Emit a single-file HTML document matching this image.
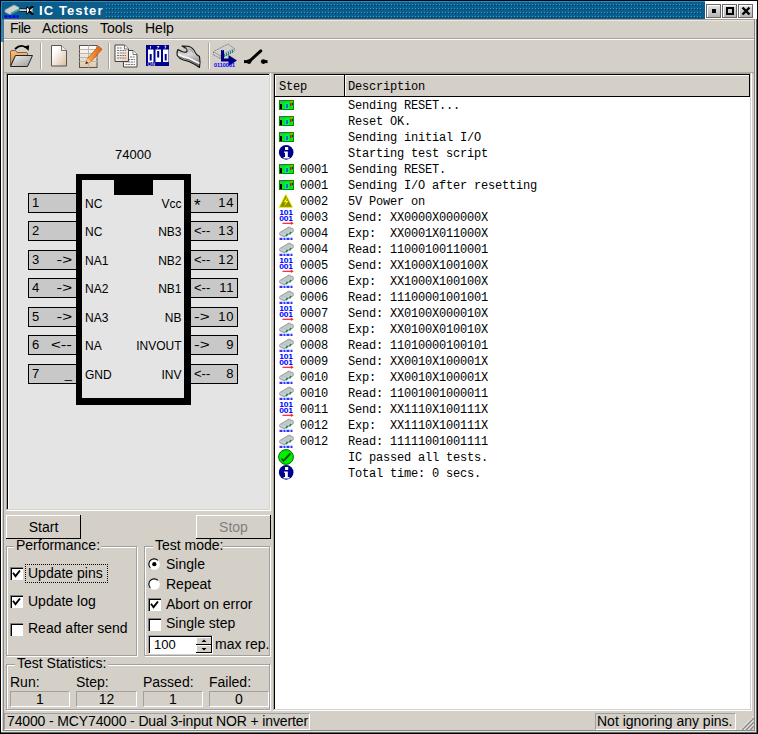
<!DOCTYPE html><html><head><meta charset="utf-8"><style>
html,body{margin:0;padding:0;}
body{width:758px;height:734px;position:relative;overflow:hidden;background:#d4d0c8;font-family:'Liberation Sans',sans-serif;}
.a{position:absolute;box-sizing:border-box;}
.t{line-height:16px;white-space:pre;}
</style></head><body>
<div class="a" style="left:0px;top:0px;width:758px;height:734px;border:1px solid #000;"></div>
<div class="a" style="left:1px;top:19px;width:1px;height:714px;background:#fff"></div>
<div class="a" style="left:3px;top:19px;width:1px;height:712px;background:#888"></div>
<div class="a" style="left:754px;top:19px;width:1px;height:712px;background:#888"></div>
<div class="a" style="left:755px;top:19px;width:1px;height:714px;background:#e8e8e8"></div>
<div class="a" style="left:756px;top:19px;width:1px;height:714px;background:#666"></div>
<div class="a" style="left:3px;top:730px;width:752px;height:1px;background:#888"></div>
<div class="a" style="left:1px;top:731px;width:755px;height:1px;background:#e4e4e4"></div>
<div class="a" style="left:1px;top:732px;width:756px;height:1px;background:#666"></div>
<div class="a" style="left:1px;top:1px;width:704px;height:18px;background:#1a8fd0"></div>
<div class="a" style="left:2px;top:2px;width:703px;height:17px;background:#0b5d8c"></div>
<svg class="a" style="left:106px;top:4px" width="599" height="14"><defs><pattern id="dp" width="3" height="4" patternUnits="userSpaceOnUse"><rect x="0" y="0" width="1" height="1" fill="#2a9fe0"/><rect x="1" y="1" width="1" height="1" fill="#073a58"/></pattern></defs><rect width="597" height="14" fill="url(#dp)"/></svg>
<div class="a t" style="left:39px;top:3px;font-size:13px;font-family:'Liberation Sans', sans-serif;color:#fff;font-weight:bold;letter-spacing:1.1px;">IC Tester</div>
<svg class="a" style="left:0px;top:0px" width="36" height="20"><path d="M5 10 L14 5 L19 7.5 L19 10 L10 14.5 L5 12 Z" fill="#d0d0d0" stroke="#a8a8a8" stroke-width="0.7"/><path d="M11 13.5 L19 9.5" stroke="#30a090" stroke-width="1.6"/><path d="M4.5 16.5 H18.5" stroke="#0000ff" stroke-width="2.5" stroke-dasharray="3 1"/><rect x="19.5" y="8.5" width="7.5" height="3" fill="#000"/><rect x="19.5" y="9.3" width="7.5" height="1.5" fill="#fff"/><path d="M26.5 6 L29 8 L31.5 6 L33.8 6 L32 10 L33.8 14.8 L31.5 14.8 L29 12.5 L26.5 14.8 Z" fill="#000"/><path d="M27.5 8 L28.7 10 L27.5 12.5 Z M30.5 9.5 L30.5 11 M32.3 8 L31.5 10.3 L32.3 12.5" fill="#fff" stroke="#fff" stroke-width="0.9"/></svg>
<div class="a" style="left:705px;top:1px;width:52px;height:18px;background:#fff"></div>
<div class="a" style="left:706px;top:4px;width:15px;height:14px;border:1px solid #6a6a6a;background:linear-gradient(#e6e6e6,#b4b4b4);"></div>
<div class="a" style="left:707px;top:5px;width:13px;height:12px;border-top:1px solid #fff;border-left:1px solid #fff;"></div>
<div class="a" style="left:722px;top:4px;width:15px;height:14px;border:1px solid #6a6a6a;background:linear-gradient(#e6e6e6,#b4b4b4);"></div>
<div class="a" style="left:723px;top:5px;width:13px;height:12px;border-top:1px solid #fff;border-left:1px solid #fff;"></div>
<div class="a" style="left:738px;top:4px;width:15px;height:14px;border:1px solid #6a6a6a;background:linear-gradient(#e6e6e6,#b4b4b4);"></div>
<div class="a" style="left:739px;top:5px;width:13px;height:12px;border-top:1px solid #fff;border-left:1px solid #fff;"></div>
<div class="a" style="left:712px;top:9px;width:4px;height:4px;background:#000"></div>
<div class="a" style="left:726px;top:7px;width:8px;height:8px;border:2px solid #000;background:#c8c8c8"></div>
<svg class="a" style="left:741px;top:6px" width="10" height="10"><path d="M1.5 1.5 L8.5 8.5 M8.5 1.5 L1.5 8.5" stroke="#000" stroke-width="2.4"/></svg>
<div class="a" style="left:1px;top:19px;width:2px;height:23px;background:#1a8fd0"></div>
<div class="a" style="left:3px;top:19px;width:1px;height:23px;background:#6a6a6a"></div>
<div class="a" style="left:4px;top:19px;width:750px;height:1px;background:#a89c8c"></div>
<div class="a" style="left:4px;top:20px;width:750px;height:1px;background:#ebe7df"></div>
<div class="a" style="left:4px;top:38px;width:750px;height:1px;background:#a8a49c"></div>
<div class="a" style="left:4px;top:39px;width:750px;height:1px;background:#fff"></div>
<div class="a t" style="left:10px;top:20px;font-size:14px;font-family:'Liberation Sans', sans-serif;color:#000;letter-spacing:-0.5px">File</div>
<div class="a t" style="left:42px;top:20px;font-size:14px;font-family:'Liberation Sans', sans-serif;color:#000;letter-spacing:0px">Actions</div>
<div class="a t" style="left:100px;top:20px;font-size:14px;font-family:'Liberation Sans', sans-serif;color:#000;letter-spacing:0px">Tools</div>
<div class="a t" style="left:145px;top:20px;font-size:14px;font-family:'Liberation Sans', sans-serif;color:#000;letter-spacing:0px">Help</div>
<div class="a" style="left:40px;top:43px;width:1px;height:26px;background:#a8a49c"></div>
<div class="a" style="left:41px;top:43px;width:1px;height:26px;background:#fff"></div>
<div class="a" style="left:108px;top:43px;width:1px;height:26px;background:#a8a49c"></div>
<div class="a" style="left:109px;top:43px;width:1px;height:26px;background:#fff"></div>
<div class="a" style="left:208px;top:43px;width:1px;height:26px;background:#a8a49c"></div>
<div class="a" style="left:209px;top:43px;width:1px;height:26px;background:#fff"></div>
<div class="a" style="left:4px;top:72px;width:750px;height:1px;background:#b0aca4"></div>
<div class="a" style="left:4px;top:73px;width:750px;height:1px;background:#c4c0b8"></div>
<svg class="a" style="left:6px;top:42px" width="32" height="28">
<defs><linearGradient id="fg" x1="0" y1="0" x2="1" y2="1"><stop offset="0" stop-color="#f0f0f0"/><stop offset="1" stop-color="#9a9a9a"/></linearGradient>
<linearGradient id="fo" x1="0" y1="0" x2="0" y2="1"><stop offset="0" stop-color="#ffc080"/><stop offset="1" stop-color="#d08030"/></linearGradient></defs>
<path d="M9 7 Q14.5 1.8 19.5 5.2" fill="none" stroke="#000" stroke-width="1.9"/>
<path d="M17.5 4.5 L23.2 3.2 L22.6 8.8 Z" fill="#000"/>
<path d="M4.5 24 L4.5 10 Q4.5 8.5 6 8.5 L9.5 8.5 L11 10.5 L20.5 10.5 Q21.5 10.5 21.5 12 L21.5 13.5 L9.5 13.5 Z" fill="url(#fo)" stroke="#5a4a3a" stroke-width="0.8"/>
<path d="M4.5 24.5 L9.5 13.5 L26.5 13.5 L21.5 24.5 Z" fill="url(#fg)" stroke="#222" stroke-width="1"/>
</svg>
<svg class="a" style="left:46px;top:42px" width="26" height="28">
<defs><linearGradient id="dg" x1="0.2" y1="0.3" x2="0.9" y2="1"><stop offset="0" stop-color="#fff"/><stop offset="1" stop-color="#dcc0a0"/></linearGradient></defs>
<path d="M5.5 3.5 L15.5 3.5 L20.5 8.5 L20.5 24 L5.5 24 Z" fill="url(#dg)" stroke="#555" stroke-width="1"/>
<path d="M15.5 3.5 L15.5 8.5 L20.5 8.5" fill="#eee" stroke="#555" stroke-width="0.8"/>
</svg>
<svg class="a" style="left:76px;top:42px" width="30" height="28">
<defs><linearGradient id="tg" x1="0" y1="0" x2="0" y2="1"><stop offset="0" stop-color="#fff"/><stop offset="1" stop-color="#e0c8a8"/></linearGradient>
<linearGradient id="pg" x1="0" y1="0" x2="1" y2="0"><stop offset="0" stop-color="#ffb060"/><stop offset="1" stop-color="#e06000"/></linearGradient></defs>
<rect x="3.5" y="3.5" width="17.5" height="22" fill="url(#tg)" stroke="#555" stroke-width="1"/>
<path d="M3.5 7.5 H21.5 M3.5 11.5 H21.5 M3.5 15.5 H21.5 M3.5 19.5 H21.5 M12.5 3.5 V25.5" stroke="#b8b8b8" stroke-width="1"/>
<path d="M9.5 22 L11.5 16.5 L22.5 4 L26 7.3 L15 19.7 Z" fill="url(#pg)" stroke="#b04000" stroke-width="0.6"/>
<path d="M9.5 22 L11.5 16.5 L15 19.7 Z" fill="#f0c8a0"/>
<path d="M9.5 22 L10.5 19.3 L12.3 20.9 Z" fill="#222"/>
</svg>
<svg class="a" style="left:110px;top:42px" width="30" height="28">
<path d="M13.5 8.5 L23 8.5 L27 12.5 L27 25 L13.5 25 Z" fill="#fafafa" stroke="#444" stroke-width="1"/>
<path d="M23 8.5 L23 12.5 L27 12.5" fill="#fff" stroke="#444" stroke-width="0.7"/>
<path d="M20 15 H25 M15.5 17.5 H25 M15.5 20 H25 M15.5 22.5 H25" stroke="#777" stroke-width="1" stroke-dasharray="2 0.7"/>
<defs><linearGradient id="cg" x1="0" y1="0" x2="1" y2="1"><stop offset="0.3" stop-color="#fafafa"/><stop offset="1" stop-color="#e8c8b0"/></linearGradient></defs>
<path d="M5 3 L14.5 3 L18.5 7 L18.5 19.5 L5 19.5 Z" fill="url(#cg)" stroke="#444" stroke-width="1"/>
<path d="M14.5 3 L14.5 7 L18.5 7" fill="#fff" stroke="#444" stroke-width="0.7"/>
<path d="M7 6 H12 M7 8.5 H16 M7 11 H16 M7 13.5 H16 M7 16 H16" stroke="#777" stroke-width="1" stroke-dasharray="2 0.7"/>
</svg>
<svg class="a" style="left:146px;top:45px" width="23" height="21">
<rect x="0" y="0" width="23" height="21" fill="#000090"/>
<rect x="2" y="4.5" width="5.5" height="12.5" fill="#fff"/><rect x="9.5" y="4.5" width="5.5" height="12.5" fill="#fff"/><rect x="17" y="4.5" width="5.5" height="12.5" fill="#fff"/>
<rect x="3.7" y="9" width="2" height="6.5" fill="#000090"/><rect x="11.2" y="6" width="2" height="6.5" fill="#000090"/><rect x="18.7" y="9" width="2" height="6.5" fill="#000090"/>
<path d="M4.5 1 V3.5 M11 1.5 H13 L11.5 3.5 M18.5 1 H20 L19 3.5" stroke="#fff" stroke-width="0.8" fill="none"/>
<text x="1.5" y="20.5" font-size="5" fill="#fff" font-family="Liberation Sans">ON</text>
</svg>
<svg class="a" style="left:174px;top:44px" width="30" height="26">
<defs><linearGradient id="wg" x1="0" y1="0" x2="0.3" y2="1"><stop offset="0" stop-color="#a8a8a8"/><stop offset="0.5" stop-color="#d8d8d8"/><stop offset="1" stop-color="#8a8a8a"/></linearGradient></defs>
<path d="M8 2 L14.5 2.2 Q19 3.5 21 8 L22.5 10.5 L25.5 12.5 L26 18 L25.5 23.5 L21 20.5 L15 17.5 L9.5 16 Q5 14.5 3.2 11.5 L3 8 L4 5.5 L8.5 7.8 Q11.5 8.8 13 7.5 Q13.5 5.5 11.8 4.3 Z" fill="url(#wg)" stroke="#111" stroke-width="1.1" stroke-linejoin="round"/>
<path d="M4.2 10 Q9 13.2 14.5 14 L25.5 19.3" fill="none" stroke="#fff" stroke-width="1.4"/>
<path d="M5.5 12.8 Q10 15.3 15 15.8 L25 21.5" fill="none" stroke="#6a6a6a" stroke-width="1"/>
<path d="M9.5 4 Q13 4.5 14.8 7.5 M15.5 5 Q18.5 6 19.5 9.5" fill="none" stroke="#888" stroke-width="0.8"/>
</svg>
<svg class="a" style="left:210px;top:42px" width="30" height="28">
<path d="M3.5 9.5 L18 2 L24.5 6.5 L24.5 9 L10 16.5 L3.5 13 Z" fill="#d0d0d0" stroke="#808080" stroke-width="1" stroke-dasharray="1.2 0.6"/>
<path d="M3.5 10 L10 13.5 L24.5 6.5 M10 13.5 V16.5" fill="none" stroke="#909090" stroke-width="0.8"/>
<path d="M14.5 15 V12 M16.5 14 V11 M18.5 13 V10 M20.5 12 V9 M22.5 11 V8" stroke="#109080" stroke-width="1"/>
<path d="M11 8 L12.2 8 L12.6 9 L13.2 8 L14 8 V16.5 H18.5 V13 L27 18.5 L18.5 24 V19.5 H11 Z" fill="#000080"/>
<text x="4" y="25.2" font-family="Liberation Sans" font-weight="bold" font-size="6" fill="#0000ff" textLength="21" lengthAdjust="spacingAndGlyphs">0110001</text>
</svg>
<svg class="a" style="left:240px;top:42px" width="32" height="28">
<path d="M4 19.6 H9" stroke="#000" stroke-width="3"/>
<circle cx="9" cy="19.6" r="2.4" fill="#000"/>
<path d="M9 19.6 L20.8 8.9" stroke="#000" stroke-width="3" stroke-linecap="round"/>
<circle cx="23.3" cy="19.6" r="2.4" fill="#000"/>
<path d="M23.3 19.6 H27.5" stroke="#000" stroke-width="3"/>
</svg>
<div class="a" style="left:6px;top:73px;width:265px;height:438px;background:#fff"></div>
<div class="a" style="left:6px;top:73px;width:264px;height:437px;background:#a0a0a0"></div>
<div class="a" style="left:7px;top:74px;width:263px;height:436px;background:#d8d4cc"></div>
<div class="a" style="left:7px;top:74px;width:262px;height:435px;background:#000"></div>
<div class="a" style="left:8px;top:75px;width:261px;height:434px;background:#fff"></div>
<div class="a" style="left:9px;top:76px;width:260px;height:433px;background:#e4e4e4"></div>
<div class="a t" style="left:115px;top:147px;font-size:13px;font-family:'Liberation Sans', sans-serif;color:#000;">74000</div>
<div class="a" style="left:28px;top:193px;width:50px;height:20px;border:1px solid #000;background:#c8c8c8"></div>
<div class="a" style="left:189px;top:193px;width:49px;height:20px;border:1px solid #000;background:#c8c8c8"></div>
<div class="a t" style="left:32px;top:195px;font-size:13px;font-family:'Liberation Sans', sans-serif;color:#000;">1</div>
<div class="a t" style="left:200px;top:195px;width:34px;text-align:right;font-size:13px;letter-spacing:0.6px">14</div>
<div class="a t" style="left:194px;top:198px;font-size:17px;">*</div>
<div class="a t" style="left:85px;top:196px;font-size:12px;font-family:'Liberation Sans', sans-serif;color:#000;">NC</div>
<div class="a t" style="left:100px;top:196px;width:81.5px;text-align:right;font-size:12px;">Vcc</div>
<div class="a" style="left:28px;top:221px;width:50px;height:20px;border:1px solid #000;background:#c8c8c8"></div>
<div class="a" style="left:189px;top:221px;width:49px;height:20px;border:1px solid #000;background:#c8c8c8"></div>
<div class="a t" style="left:32px;top:223px;font-size:13px;font-family:'Liberation Sans', sans-serif;color:#000;">2</div>
<div class="a t" style="left:200px;top:223px;width:34px;text-align:right;font-size:13px;letter-spacing:0.6px">13</div>
<div class="a t" style="left:194px;top:223px;font-size:13px;">&lt;--</div>
<div class="a t" style="left:85px;top:224px;font-size:12px;font-family:'Liberation Sans', sans-serif;color:#000;">NC</div>
<div class="a t" style="left:100px;top:224px;width:81.5px;text-align:right;font-size:12px;">NB3</div>
<div class="a" style="left:28px;top:250px;width:50px;height:20px;border:1px solid #000;background:#c8c8c8"></div>
<div class="a" style="left:189px;top:250px;width:49px;height:20px;border:1px solid #000;background:#c8c8c8"></div>
<div class="a t" style="left:32px;top:252px;font-size:13px;font-family:'Liberation Sans', sans-serif;color:#000;">3</div>
<div class="a t" style="left:40px;top:252px;width:32px;text-align:right;font-size:13px;transform:scaleX(1.3);transform-origin:100% 0">-&gt;</div>
<div class="a t" style="left:200px;top:252px;width:34px;text-align:right;font-size:13px;letter-spacing:0.6px">12</div>
<div class="a t" style="left:194px;top:252px;font-size:13px;">&lt;--</div>
<div class="a t" style="left:85px;top:253px;font-size:12px;font-family:'Liberation Sans', sans-serif;color:#000;">NA1</div>
<div class="a t" style="left:100px;top:253px;width:81.5px;text-align:right;font-size:12px;">NB2</div>
<div class="a" style="left:28px;top:278px;width:50px;height:20px;border:1px solid #000;background:#c8c8c8"></div>
<div class="a" style="left:189px;top:278px;width:49px;height:20px;border:1px solid #000;background:#c8c8c8"></div>
<div class="a t" style="left:32px;top:280px;font-size:13px;font-family:'Liberation Sans', sans-serif;color:#000;">4</div>
<div class="a t" style="left:40px;top:280px;width:32px;text-align:right;font-size:13px;transform:scaleX(1.3);transform-origin:100% 0">-&gt;</div>
<div class="a t" style="left:200px;top:280px;width:34px;text-align:right;font-size:13px;letter-spacing:0.6px">11</div>
<div class="a t" style="left:194px;top:280px;font-size:13px;">&lt;--</div>
<div class="a t" style="left:85px;top:281px;font-size:12px;font-family:'Liberation Sans', sans-serif;color:#000;">NA2</div>
<div class="a t" style="left:100px;top:281px;width:81.5px;text-align:right;font-size:12px;">NB1</div>
<div class="a" style="left:28px;top:307px;width:50px;height:20px;border:1px solid #000;background:#c8c8c8"></div>
<div class="a" style="left:189px;top:307px;width:49px;height:20px;border:1px solid #000;background:#c8c8c8"></div>
<div class="a t" style="left:32px;top:309px;font-size:13px;font-family:'Liberation Sans', sans-serif;color:#000;">5</div>
<div class="a t" style="left:40px;top:309px;width:32px;text-align:right;font-size:13px;transform:scaleX(1.3);transform-origin:100% 0">-&gt;</div>
<div class="a t" style="left:200px;top:309px;width:34px;text-align:right;font-size:13px;letter-spacing:0.6px">10</div>
<div class="a t" style="left:194px;top:309px;font-size:13px;transform:scaleX(1.3);transform-origin:0 0">-&gt;</div>
<div class="a t" style="left:85px;top:310px;font-size:12px;font-family:'Liberation Sans', sans-serif;color:#000;">NA3</div>
<div class="a t" style="left:100px;top:310px;width:81.5px;text-align:right;font-size:12px;">NB</div>
<div class="a" style="left:28px;top:335px;width:50px;height:20px;border:1px solid #000;background:#c8c8c8"></div>
<div class="a" style="left:189px;top:335px;width:49px;height:20px;border:1px solid #000;background:#c8c8c8"></div>
<div class="a t" style="left:32px;top:337px;font-size:13px;font-family:'Liberation Sans', sans-serif;color:#000;">6</div>
<div class="a t" style="left:40px;top:337px;width:32px;text-align:right;font-size:13px;transform:scaleX(1.3);transform-origin:100% 0">&lt;--</div>
<div class="a t" style="left:200px;top:337px;width:34px;text-align:right;font-size:13px;letter-spacing:0.6px">9</div>
<div class="a t" style="left:194px;top:337px;font-size:13px;transform:scaleX(1.3);transform-origin:0 0">-&gt;</div>
<div class="a t" style="left:85px;top:338px;font-size:12px;font-family:'Liberation Sans', sans-serif;color:#000;">NA</div>
<div class="a t" style="left:100px;top:338px;width:81.5px;text-align:right;font-size:12px;">INVOUT</div>
<div class="a" style="left:28px;top:364px;width:50px;height:20px;border:1px solid #000;background:#c8c8c8"></div>
<div class="a" style="left:189px;top:364px;width:49px;height:20px;border:1px solid #000;background:#c8c8c8"></div>
<div class="a t" style="left:32px;top:366px;font-size:13px;font-family:'Liberation Sans', sans-serif;color:#000;">7</div>
<div class="a t" style="left:40px;top:366px;width:32px;text-align:right;font-size:13px;">_</div>
<div class="a t" style="left:200px;top:366px;width:34px;text-align:right;font-size:13px;letter-spacing:0.6px">8</div>
<div class="a t" style="left:194px;top:366px;font-size:13px;">&lt;--</div>
<div class="a t" style="left:85px;top:367px;font-size:12px;font-family:'Liberation Sans', sans-serif;color:#000;">GND</div>
<div class="a t" style="left:100px;top:367px;width:81.5px;text-align:right;font-size:12px;">INV</div>
<div class="a" style="left:76px;top:174px;width:115px;height:231px;border-style:solid;border-color:#000;border-width:6px 7px 7px 6px;"></div>
<div class="a" style="left:114px;top:180px;width:39px;height:15px;background:#000"></div>
<div class="a" style="left:6px;top:515px;width:75px;height:24px;background:#000"></div>
<div class="a" style="left:6px;top:515px;width:74px;height:23px;background:#fff"></div>
<div class="a" style="left:7px;top:516px;width:73px;height:22px;background:#d4d0c8"></div>
<div class="a t" style="left:6px;top:519px;width:75px;text-align:center;font-size:14px;color:#000">Start</div>
<div class="a" style="left:196px;top:515px;width:75px;height:24px;background:#000"></div>
<div class="a" style="left:196px;top:515px;width:74px;height:23px;background:#fff"></div>
<div class="a" style="left:197px;top:516px;width:73px;height:22px;background:#d4d0c8"></div>
<div class="a t" style="left:196px;top:519px;width:75px;text-align:center;font-size:14px;color:#808080">Stop</div>
<div class="a" style="left:7px;top:547px;width:131px;height:110px;border:1px solid #fff"></div>
<div class="a" style="left:6px;top:546px;width:131px;height:110px;border:1px solid #a0a0a0"></div>
<div class="a" style="left:14px;top:540px;width:87px;height:12px;background:#d4d0c8"></div>
<div class="a t" style="left:16px;top:537px;font-size:14px;font-family:'Liberation Sans', sans-serif;color:#000;">Performance:</div>
<div class="a" style="left:145px;top:547px;width:126px;height:110px;border:1px solid #fff"></div>
<div class="a" style="left:144px;top:546px;width:126px;height:110px;border:1px solid #a0a0a0"></div>
<div class="a" style="left:153px;top:540px;width:70px;height:12px;background:#d4d0c8"></div>
<div class="a t" style="left:155px;top:537px;font-size:14px;font-family:'Liberation Sans', sans-serif;color:#000;">Test mode:</div>
<div class="a" style="left:7px;top:665px;width:264px;height:46px;border:1px solid #fff"></div>
<div class="a" style="left:6px;top:664px;width:264px;height:46px;border:1px solid #a0a0a0"></div>
<div class="a" style="left:15px;top:658px;width:93px;height:12px;background:#d4d0c8"></div>
<div class="a t" style="left:17px;top:655px;font-size:14px;font-family:'Liberation Sans', sans-serif;color:#000;">Test Statistics:</div>
<div class="a" style="left:10px;top:567px;width:13px;height:13px;background:#fff;border-top:1px solid #808080;border-left:1px solid #808080;"></div>
<div class="a" style="left:11px;top:568px;width:12px;height:12px;border-top:1px solid #000;border-left:1px solid #000;"></div>
<svg class="a" style="left:10px;top:567px" width="13" height="13"><path d="M3 5.8 L5.5 9.2 L10 3.5" fill="none" stroke="#000" stroke-width="1.9"/></svg>
<div class="a" style="left:10px;top:595px;width:13px;height:13px;background:#fff;border-top:1px solid #808080;border-left:1px solid #808080;"></div>
<div class="a" style="left:11px;top:596px;width:12px;height:12px;border-top:1px solid #000;border-left:1px solid #000;"></div>
<svg class="a" style="left:10px;top:595px" width="13" height="13"><path d="M3 5.8 L5.5 9.2 L10 3.5" fill="none" stroke="#000" stroke-width="1.9"/></svg>
<div class="a" style="left:10px;top:623px;width:13px;height:13px;background:#fff;border-top:1px solid #808080;border-left:1px solid #808080;"></div>
<div class="a" style="left:11px;top:624px;width:12px;height:12px;border-top:1px solid #000;border-left:1px solid #000;"></div>
<div class="a t" style="left:28px;top:565px;font-size:14px;font-family:'Liberation Sans', sans-serif;color:#000;">Update pins</div>
<div class="a" style="left:25px;top:564px;width:83px;height:19px;border:1px dotted #000"></div>
<div class="a t" style="left:28px;top:593px;font-size:14px;font-family:'Liberation Sans', sans-serif;color:#000;">Update log</div>
<div class="a t" style="left:28px;top:620px;font-size:14px;font-family:'Liberation Sans', sans-serif;color:#000;">Read after send</div>
<svg class="a" style="left:148px;top:558px" width="13" height="13"><circle cx="6.4" cy="6.4" r="5.4" fill="#fff"/><path d="M9.9 2.4 A5 5 0 0 0 2.4 9.9" fill="none" stroke="#000" stroke-width="1.1"/><circle cx="6.3" cy="6.2" r="2.1" fill="#000"/></svg>
<svg class="a" style="left:148px;top:578px" width="13" height="13"><circle cx="6.4" cy="6.4" r="5.4" fill="#fff"/><path d="M9.9 2.4 A5 5 0 0 0 2.4 9.9" fill="none" stroke="#000" stroke-width="1.1"/></svg>
<div class="a t" style="left:166px;top:556px;font-size:14px;font-family:'Liberation Sans', sans-serif;color:#000;">Single</div>
<div class="a t" style="left:166px;top:576px;font-size:14px;font-family:'Liberation Sans', sans-serif;color:#000;">Repeat</div>
<div class="a" style="left:148px;top:598px;width:13px;height:13px;background:#fff;border-top:1px solid #808080;border-left:1px solid #808080;"></div>
<div class="a" style="left:149px;top:599px;width:12px;height:12px;border-top:1px solid #000;border-left:1px solid #000;"></div>
<svg class="a" style="left:148px;top:598px" width="13" height="13"><path d="M3 5.8 L5.5 9.2 L10 3.5" fill="none" stroke="#000" stroke-width="1.9"/></svg>
<div class="a" style="left:148px;top:618px;width:13px;height:13px;background:#fff;border-top:1px solid #808080;border-left:1px solid #808080;"></div>
<div class="a" style="left:149px;top:619px;width:12px;height:12px;border-top:1px solid #000;border-left:1px solid #000;"></div>
<div class="a t" style="left:166px;top:596px;font-size:14px;font-family:'Liberation Sans', sans-serif;color:#000;">Abort on error</div>
<div class="a t" style="left:166px;top:615px;font-size:14px;font-family:'Liberation Sans', sans-serif;color:#000;">Single step</div>
<div class="a" style="left:148px;top:635px;width:65px;height:19px;background:#fff;border-top:1px solid #a0a0a0;border-left:1px solid #a0a0a0;border-right:1px solid #fff;border-bottom:1px solid #fff"></div>
<div class="a" style="left:149px;top:636px;width:63px;height:17px;border-top:1px solid #000;border-left:1px solid #000;"></div>
<div class="a t" style="left:154px;top:637px;font-size:13px;font-family:'Liberation Sans', sans-serif;color:#000;">100</div>
<div class="a" style="left:196px;top:637px;width:16px;height:8px;background:#000"></div>
<div class="a" style="left:196px;top:637px;width:15px;height:7px;background:#fff"></div>
<div class="a" style="left:197px;top:638px;width:14px;height:6px;background:#d4d0c8"></div>
<div class="a" style="left:196px;top:645px;width:16px;height:8px;background:#000"></div>
<div class="a" style="left:196px;top:645px;width:15px;height:7px;background:#fff"></div>
<div class="a" style="left:197px;top:646px;width:14px;height:6px;background:#d4d0c8"></div>
<svg class="a" style="left:196px;top:637px" width="16" height="16"><path d="M5.5 5 L8 2.5 L10.5 5 Z M5.5 11 L8 13.5 L10.5 11 Z" fill="#000"/></svg>
<div class="a t" style="left:215px;top:636px;font-size:14px;font-family:'Liberation Sans', sans-serif;color:#000;">max rep.</div>
<div class="a t" style="left:10px;top:674px;font-size:14px;font-family:'Liberation Sans', sans-serif;color:#000;">Run:</div>
<div class="a t" style="left:76px;top:674px;font-size:14px;font-family:'Liberation Sans', sans-serif;color:#000;">Step:</div>
<div class="a t" style="left:143px;top:674px;font-size:14px;font-family:'Liberation Sans', sans-serif;color:#000;">Passed:</div>
<div class="a t" style="left:209px;top:674px;font-size:14px;font-family:'Liberation Sans', sans-serif;color:#000;">Failed:</div>
<div class="a" style="left:10px;top:691px;width:60px;height:16px;background:#d4d0c8;border-top:1px solid #a0a0a0;border-left:1px solid #a0a0a0;border-right:1px solid #fff;border-bottom:1px solid #fff"></div>
<div class="a t" style="left:10px;top:691px;width:60px;text-align:center;font-size:14px;">1</div>
<div class="a" style="left:76px;top:691px;width:61px;height:16px;background:#d4d0c8;border-top:1px solid #a0a0a0;border-left:1px solid #a0a0a0;border-right:1px solid #fff;border-bottom:1px solid #fff"></div>
<div class="a t" style="left:76px;top:691px;width:61px;text-align:center;font-size:14px;">12</div>
<div class="a" style="left:143px;top:691px;width:60px;height:16px;background:#d4d0c8;border-top:1px solid #a0a0a0;border-left:1px solid #a0a0a0;border-right:1px solid #fff;border-bottom:1px solid #fff"></div>
<div class="a t" style="left:143px;top:691px;width:60px;text-align:center;font-size:14px;">1</div>
<div class="a" style="left:209px;top:691px;width:60px;height:16px;background:#d4d0c8;border-top:1px solid #a0a0a0;border-left:1px solid #a0a0a0;border-right:1px solid #fff;border-bottom:1px solid #fff"></div>
<div class="a t" style="left:209px;top:691px;width:60px;text-align:center;font-size:14px;">0</div>
<div class="a" style="left:273px;top:73px;width:479px;height:638px;background:#fff"></div>
<div class="a" style="left:273px;top:73px;width:478px;height:637px;background:#a8a49c"></div>
<div class="a" style="left:274px;top:74px;width:477px;height:636px;background:#d4d0c8"></div>
<div class="a" style="left:274px;top:74px;width:476px;height:635px;background:#000"></div>
<div class="a" style="left:275px;top:75px;width:475px;height:634px;background:#fff"></div>
<div class="a" style="left:275px;top:75px;width:70px;height:22px;background:#000"></div>
<div class="a" style="left:275px;top:75px;width:69px;height:21px;background:#fff"></div>
<div class="a" style="left:276px;top:76px;width:68px;height:20px;background:#d4d0c8"></div>
<div class="a" style="left:345px;top:75px;width:405px;height:22px;background:#000"></div>
<div class="a" style="left:345px;top:75px;width:404px;height:21px;background:#fff"></div>
<div class="a" style="left:346px;top:76px;width:403px;height:20px;background:#d4d0c8"></div>
<div class="a t" style="left:279px;top:79px;font-family:'Liberation Mono', monospace;font-size:12px;letter-spacing:-0.2px">Step</div>
<div class="a t" style="left:348px;top:79px;font-family:'Liberation Mono', monospace;font-size:12px;letter-spacing:-0.2px">Description</div>
<svg width="0" height="0" style="position:absolute">
<defs>
<symbol id="ig" viewBox="-1 0 16 16">
<rect x="0" y="3" width="15" height="10" fill="#00d000"/>
<rect x="0.5" y="3.5" width="14" height="9" fill="none" stroke="#009000" stroke-width="1"/>
<rect x="1" y="4" width="13" height="8" fill="#00f000"/>
<rect x="1" y="4" width="4" height="1.5" fill="#7a8a9a"/>
<rect x="1" y="7" width="2" height="5" fill="#000"/>
<rect x="6" y="6" width="4" height="6" fill="#00e0e0"/>
<rect x="7" y="7" width="2" height="4" fill="#008080"/>
<rect x="11" y="6" width="1.5" height="3" fill="#ff0000"/>
<rect x="11" y="4" width="3" height="1" fill="#ff8000"/>
<rect x="13" y="6" width="1" height="2" fill="#004000"/>
</symbol>
<symbol id="ii" viewBox="-1 0 16 16">
<circle cx="7.2" cy="7.4" r="7.3" fill="#000090"/>
<rect x="6" y="2" width="3.2" height="3" fill="#fff"/>
<path d="M5 6.5 H8.8 V12 H10.5 V13.5 H4.5 V12 H6 V7.8 H5 Z" fill="#fff"/>
</symbol>
<symbol id="iw" viewBox="-1 0 16 16">
<path d="M6.8 1.4 L13.5 14.3 L0.2 14.3 Z" fill="#8c8c00" stroke="#e8e800" stroke-width="0.9" stroke-linejoin="round"/>
<path d="M8.6 3.6 L4.6 9.2 L7.2 9 L5.2 13.6 L9.6 7.8 L7.2 8 Z" fill="#ffff00"/>
</symbol>
<symbol id="ib" viewBox="-1 0 16 16">
<text x="0.2" y="6.1" font-family="Liberation Sans" font-weight="bold" font-size="7.6" fill="#0000ff" textLength="13.6" lengthAdjust="spacingAndGlyphs">101</text>
<text x="0.2" y="11.8" font-family="Liberation Sans" font-weight="bold" font-size="7.6" fill="#0000ff" textLength="13.6" lengthAdjust="spacingAndGlyphs">001</text>
<path d="M3.5 14.3 H12.5" stroke="#ff2020" stroke-width="1.2"/>
<path d="M11.8 12.6 L14.7 14.3 L11.8 16 Z" fill="#ff2020"/>
</symbol>
<symbol id="ic" viewBox="-1 0 16 16">
<path d="M0.8 7.5 L10 2 L14.2 4 L14.2 6.8 L5 11.8 L0.8 9.8 Z" fill="#c4c4c4" stroke="#8a8a8a" stroke-width="0.8" stroke-linejoin="round"/>
<path d="M1 8 L5 10 L14 5" fill="none" stroke="#e0e0e0" stroke-width="0.6"/>
<path d="M7 11.2 L8.6 8.8 M10.4 9.4 L12 7" stroke="#108878" stroke-width="1.7"/>
<path d="M0.5 13.9 H14.5" stroke="#3030ff" stroke-width="2.4" stroke-dasharray="3 1 2 1"/>
</symbol>
<symbol id="ik" viewBox="-1 0 16 16">
<circle cx="7" cy="8" r="7.4" fill="#00ee00" stroke="#007000" stroke-width="1"/>
<path d="M2.5 9.5 L4.5 11.8 L11.5 4.3" fill="none" stroke="#005000" stroke-width="1.8"/>
</symbol>
</defs></svg>
<div class="a" style="left:0;top:0;font-family:'Liberation Mono', monospace;font-size:12px;letter-spacing:-0.2px;">
<svg class="a" style="left:278px;top:97px" width="16" height="16"><use href="#ig"/></svg>
<div class="a t" style="left:348px;top:98px">Sending RESET...</div>
<svg class="a" style="left:278px;top:113px" width="16" height="16"><use href="#ig"/></svg>
<div class="a t" style="left:348px;top:114px">Reset OK.</div>
<svg class="a" style="left:278px;top:129px" width="16" height="16"><use href="#ig"/></svg>
<div class="a t" style="left:348px;top:130px">Sending initial I/O</div>
<svg class="a" style="left:278px;top:145px" width="16" height="16"><use href="#ii"/></svg>
<div class="a t" style="left:348px;top:146px">Starting test script</div>
<svg class="a" style="left:278px;top:161px" width="16" height="16"><use href="#ig"/></svg>
<div class="a t" style="left:300px;top:162px">0001</div>
<div class="a t" style="left:348px;top:162px">Sending RESET.</div>
<svg class="a" style="left:278px;top:177px" width="16" height="16"><use href="#ig"/></svg>
<div class="a t" style="left:300px;top:178px">0001</div>
<div class="a t" style="left:348px;top:178px">Sending I/O after resetting</div>
<svg class="a" style="left:278px;top:193px" width="16" height="16"><use href="#iw"/></svg>
<div class="a t" style="left:300px;top:194px">0002</div>
<div class="a t" style="left:348px;top:194px">5V Power on</div>
<svg class="a" style="left:278px;top:209px" width="16" height="16"><use href="#ib"/></svg>
<div class="a t" style="left:300px;top:210px">0003</div>
<div class="a t" style="left:348px;top:210px">Send: XX0000X000000X</div>
<svg class="a" style="left:278px;top:225px" width="16" height="16"><use href="#ic"/></svg>
<div class="a t" style="left:300px;top:226px">0004</div>
<div class="a t" style="left:348px;top:226px">Exp:  XX0001X011000X</div>
<svg class="a" style="left:278px;top:241px" width="16" height="16"><use href="#ic"/></svg>
<div class="a t" style="left:300px;top:242px">0004</div>
<div class="a t" style="left:348px;top:242px">Read: 11000100110001</div>
<svg class="a" style="left:278px;top:257px" width="16" height="16"><use href="#ib"/></svg>
<div class="a t" style="left:300px;top:258px">0005</div>
<div class="a t" style="left:348px;top:258px">Send: XX1000X100100X</div>
<svg class="a" style="left:278px;top:273px" width="16" height="16"><use href="#ic"/></svg>
<div class="a t" style="left:300px;top:274px">0006</div>
<div class="a t" style="left:348px;top:274px">Exp:  XX1000X100100X</div>
<svg class="a" style="left:278px;top:289px" width="16" height="16"><use href="#ic"/></svg>
<div class="a t" style="left:300px;top:290px">0006</div>
<div class="a t" style="left:348px;top:290px">Read: 11100001001001</div>
<svg class="a" style="left:278px;top:305px" width="16" height="16"><use href="#ib"/></svg>
<div class="a t" style="left:300px;top:306px">0007</div>
<div class="a t" style="left:348px;top:306px">Send: XX0100X000010X</div>
<svg class="a" style="left:278px;top:321px" width="16" height="16"><use href="#ic"/></svg>
<div class="a t" style="left:300px;top:322px">0008</div>
<div class="a t" style="left:348px;top:322px">Exp:  XX0100X010010X</div>
<svg class="a" style="left:278px;top:337px" width="16" height="16"><use href="#ic"/></svg>
<div class="a t" style="left:300px;top:338px">0008</div>
<div class="a t" style="left:348px;top:338px">Read: 11010000100101</div>
<svg class="a" style="left:278px;top:353px" width="16" height="16"><use href="#ib"/></svg>
<div class="a t" style="left:300px;top:354px">0009</div>
<div class="a t" style="left:348px;top:354px">Send: XX0010X100001X</div>
<svg class="a" style="left:278px;top:369px" width="16" height="16"><use href="#ic"/></svg>
<div class="a t" style="left:300px;top:370px">0010</div>
<div class="a t" style="left:348px;top:370px">Exp:  XX0010X100001X</div>
<svg class="a" style="left:278px;top:385px" width="16" height="16"><use href="#ic"/></svg>
<div class="a t" style="left:300px;top:386px">0010</div>
<div class="a t" style="left:348px;top:386px">Read: 11001001000011</div>
<svg class="a" style="left:278px;top:401px" width="16" height="16"><use href="#ib"/></svg>
<div class="a t" style="left:300px;top:402px">0011</div>
<div class="a t" style="left:348px;top:402px">Send: XX1110X100111X</div>
<svg class="a" style="left:278px;top:417px" width="16" height="16"><use href="#ic"/></svg>
<div class="a t" style="left:300px;top:418px">0012</div>
<div class="a t" style="left:348px;top:418px">Exp:  XX1110X100111X</div>
<svg class="a" style="left:278px;top:433px" width="16" height="16"><use href="#ic"/></svg>
<div class="a t" style="left:300px;top:434px">0012</div>
<div class="a t" style="left:348px;top:434px">Read: 11111001001111</div>
<svg class="a" style="left:278px;top:449px" width="16" height="16"><use href="#ik"/></svg>
<div class="a t" style="left:348px;top:450px">IC passed all tests.</div>
<svg class="a" style="left:278px;top:465px" width="16" height="16"><use href="#ii"/></svg>
<div class="a t" style="left:348px;top:466px">Total time: 0 secs.</div>
</div>
<div class="a" style="left:4px;top:713px;width:306px;height:17px;border-top:1px solid #a0a0a0;border-left:1px solid #a0a0a0;border-right:1px solid #fff;border-bottom:1px solid #fff"></div>
<div class="a t" style="left:7px;top:713px;font-size:14px;font-family:'Liberation Sans', sans-serif;color:#000;letter-spacing:-0.13px">74000 - MCY74000 - Dual 3-input NOR + inverter</div>
<div class="a" style="left:595px;top:713px;width:141px;height:17px;border-top:1px solid #a0a0a0;border-left:1px solid #a0a0a0;border-right:1px solid #fff;border-bottom:1px solid #fff"></div>
<div class="a t" style="left:597px;top:713px;font-size:14px;font-family:'Liberation Sans', sans-serif;color:#000;">Not ignoring any pins.</div>
<svg class="a" style="left:740px;top:716px" width="14" height="14"><path d="M14 0.5 L0.5 14 M14 4.5 L4.5 14 M14 8.5 L8.5 14" stroke="#fff" stroke-width="1"/><path d="M14 2 L2 14 M14 6 L6 14 M14 10 L10 14" stroke="#8c8c8c" stroke-width="1.5"/></svg>
</body></html>
